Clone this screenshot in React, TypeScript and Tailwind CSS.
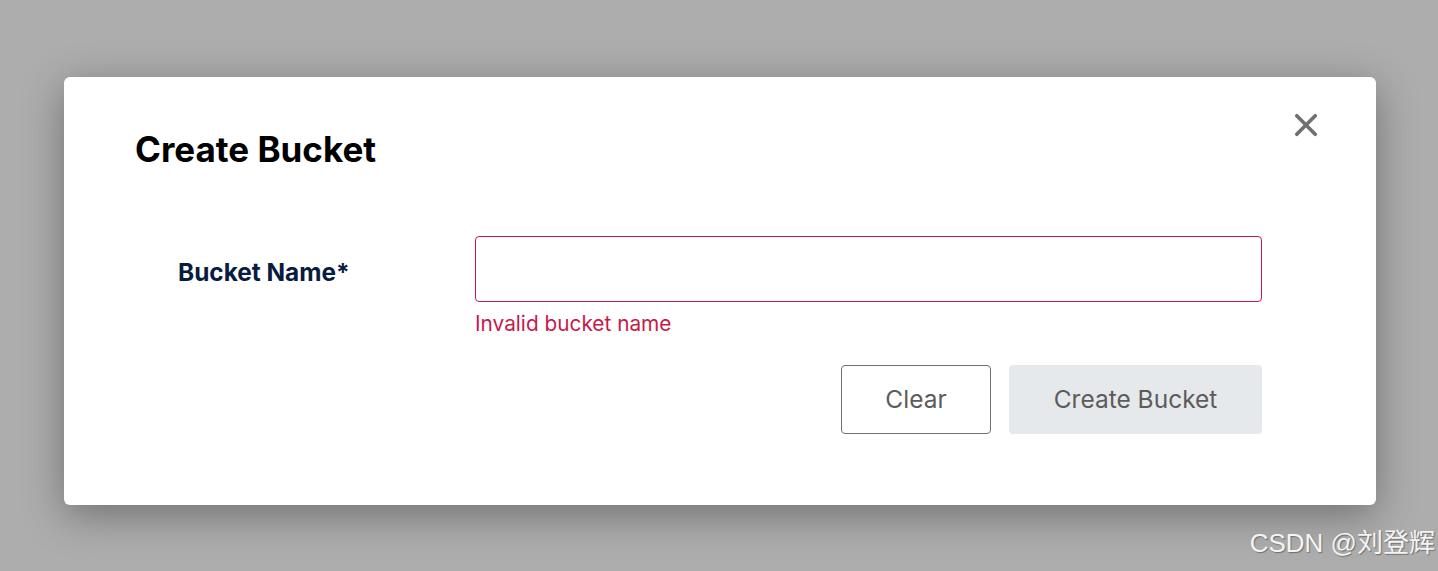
import React from "react";

export default function App() {
  return (
    <div
      className="relative w-[1438px] h-[571px] overflow-hidden bg-[#adadad]"
      style={{ fontFamily: "Inter, 'Noto Sans', sans-serif" }}
    >
      <div className="pl-[64px] pt-[77px]">
        <div className="relative w-[1312px] h-[428px] rounded-[6px] bg-white shadow-[0_10px_40px_rgba(0,0,0,0.35)]">
          <button className="absolute left-[1230px] top-[36px] w-[24px] h-[24px] flex items-center justify-center">
            <svg width="26" height="26" viewBox="0 0 26 26">
              <path d="M3 3 L23 23 M23 3 L3 23" stroke="#707070" strokeWidth="4" strokeLinecap="round" />
            </svg>
          </button>
          <div className="pl-[71px] pt-[50px]">
            <h1 className="text-[35px] leading-[44px] font-bold text-black">Create Bucket</h1>
          </div>
          <div className="flex mt-[65px]">
            <div className="w-[411px] pl-[114px] pt-[21px]">
              <span className="text-[24.4px] leading-[30px] font-bold text-[#081c42]">Bucket Name*</span>
            </div>
            <div className="w-[787px] flex flex-col">
              <input className="w-[787px] h-[66px] rounded-[4px] border border-[#c51b4b] outline-none px-4 text-[20px]" />
              <span className="mt-[10px] text-[20.8px] leading-[24px] text-[#c51b4b]">Invalid bucket name</span>
              <div className="flex justify-end gap-[18px] mt-[29px]">
                <button className="w-[150px] h-[69px] rounded-[4px] border border-[#707070] bg-white text-[24.5px] text-[#5c5c5c]">
                  Clear
                </button>
                <button className="w-[253px] h-[69px] rounded-[4px] bg-[#e6e9eb] text-[24.5px] text-[#5c5c5c]">
                  Create Bucket
                </button>
              </div>
            </div>
          </div>
        </div>
      </div>
      <div
        className="absolute right-[3px] top-[525px] text-[26px] leading-[36px] text-[#f4f4f4] [text-shadow:1px_1px_1px_rgba(0,0,0,0.35)]"
        style={{ fontFamily: "'Liberation Sans', 'Noto Sans CJK SC', sans-serif" }}
      >
        CSDN @刘登辉
      </div>
    </div>
  );
}
